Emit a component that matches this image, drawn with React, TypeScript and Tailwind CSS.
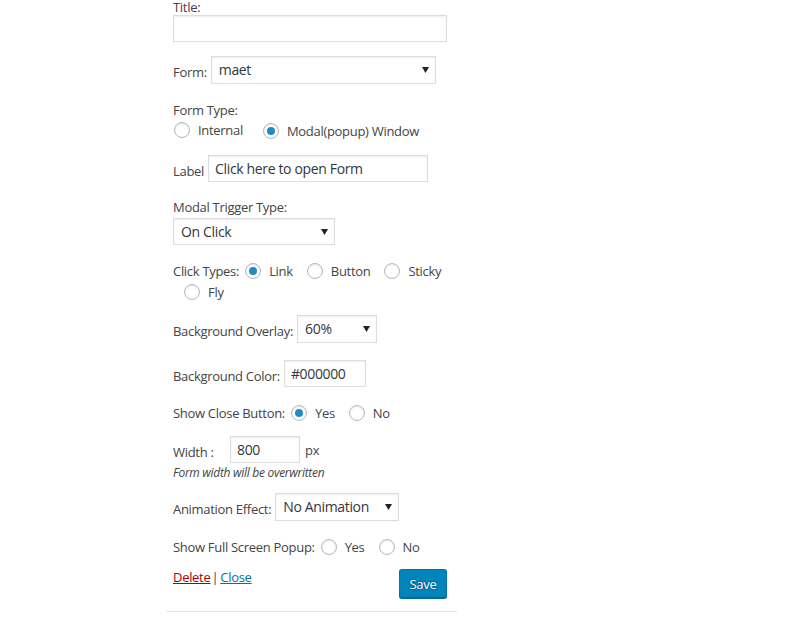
import React from "react";

const font = { fontFamily: '"Open Sans", "Noto Sans", sans-serif' };

function Radio({ checked }: { checked?: boolean }) {
  return (
    <span className="inline-flex h-[16px] w-[16px] shrink-0 items-center justify-center rounded-full border border-[#b4b9be] bg-white shadow-[inset_0_1px_2px_rgba(0,0,0,0.1)]">
      {checked && <span className="block h-[8px] w-[8px] rounded-full bg-[#1e8cbe]" />}
    </span>
  );
}

function RadioOpt({ label, checked, className = "" }: { label: string; checked?: boolean; className?: string }) {
  return (
    <span className={"inline-flex items-center " + className}>
      <Radio checked={checked} />
      <span className="ml-[8px]">{label}</span>
    </span>
  );
}

function Select({ value, w }: { value: string; w: string }) {
  return (
    <div className={"flex h-full items-center justify-between border border-[#ddd] bg-white pl-[7px] pr-[6px] text-[14px] tracking-[-0.35px] text-[#32373c] shadow-[inset_0_1px_2px_rgba(0,0,0,0.07)] " + w}>
      <span>{value}</span>
      <svg width="7" height="6" viewBox="0 0 7 6">
        <path d="M0 0 L7 0 L3.5 6 Z" fill="#222" />
      </svg>
    </div>
  );
}

function Input({ value, w }: { value?: string; w: string }) {
  return (
    <div className={"flex h-full items-center border border-[#ddd] bg-white px-[6px] text-[14px] tracking-[-0.35px] text-[#32373c] shadow-[inset_0_1px_2px_rgba(0,0,0,0.07)] " + w}>
      {value}
    </div>
  );
}

export default function App() {
  return (
    <div className="min-h-[644px] w-[812px] overflow-hidden bg-white" style={font}>
      <div className="ml-[166px] w-[291px] border-b border-[#e5e5e5] pb-[13px] pl-[7px] pr-[10px] text-[13px] leading-[18px] tracking-[-0.3px] text-[#444]">
        <div className="h-[15px] leading-[15px]">Title:</div>
        <div className="h-[27px]">
          <Input w="w-[274px]" />
        </div>

        <div className="mt-[14px] flex h-[28px] items-center">
          <span className="mt-[3px]">Form:</span>
          <div className="ml-[4px] h-full">
            <Select value="maet" w="w-[225px]" />
          </div>
        </div>

        <div className="mt-[17px] h-[18px]">Form Type:</div>
        <div className="mt-[3px] flex h-[18px] items-center">
          <span className="ml-[1px]"><RadioOpt label="Internal" /></span>
          <RadioOpt label="Modal(popup) Window" checked className="ml-[20px]" />
        </div>

        <div className="mt-[15px] flex h-[27px] items-center">
          <span className="mt-[4px]">Label</span>
          <div className="ml-[4px] h-full">
            <Input value="Click here to open Form" w="w-[220px]" />
          </div>
        </div>

        <div className="mt-[16px] h-[18px]">Modal Trigger Type:</div>
        <div className="mt-[2px] h-[27px]">
          <Select value="On Click" w="w-[162px]" />
        </div>

        <div className="mt-[17px] flex h-[18px] items-center">
          <span>Click Types:</span>
          <RadioOpt label="Link" checked className="ml-[6px]" />
          <RadioOpt label="Button" className="ml-[14px]" />
          <RadioOpt label="Sticky" className="ml-[14px]" />
        </div>
        <div className="mt-[3px] flex h-[18px] items-center pl-[11px]">
          <RadioOpt label="Fly" />
        </div>

        <div className="mt-[14px] flex h-[28px] items-center">
          <span className="mt-[3px]">Background Overlay:</span>
          <div className="ml-[4px] h-full">
            <Select value="60%" w="w-[80px]" />
          </div>
        </div>

        <div className="mt-[17px] flex h-[27px] items-center">
          <span className="mt-[5px]">Background Color:</span>
          <div className="ml-[4px] h-full">
            <Input value="#000000" w="w-[82px]" />
          </div>
        </div>

        <div className="mt-[17px] flex h-[18px] items-center">
          <span>Show Close Button:</span>
          <RadioOpt label="Yes" checked className="ml-[6px]" />
          <RadioOpt label="No" className="ml-[14px]" />
        </div>

        <div className="mt-[14px] flex h-[27px] items-center">
          <span className="mt-[4px] w-[57px]">Width :</span>
          <div className="h-full">
            <Input value="800" w="w-[70px]" />
          </div>
          <span className="ml-[5px]">px</span>
        </div>
        <div className="mt-[2px] h-[16px] text-[12px] italic leading-[16px]">Form width will be overwritten</div>

        <div className="mt-[12px] flex h-[28px] items-center">
          <span className="mt-[3px]">Animation Effect:</span>
          <div className="ml-[4px] h-full">
            <Select value="No Animation" w="w-[124px]" />
          </div>
        </div>

        <div className="mt-[17px] flex h-[18px] items-center">
          <span>Show Full Screen Popup:</span>
          <RadioOpt label="Yes" className="ml-[6px]" />
          <RadioOpt label="No" className="ml-[14px]" />
        </div>

        <div className="mt-[13px] flex h-[29px] items-start justify-between">
          <div className="-mt-[1px] flex">
            <span className="text-[#a00] underline">Delete</span>
            <span className="ml-[1px] text-[#444]">|</span>
            <span className="ml-[2px] text-[#0073aa] underline">Close</span>
          </div>
          <button className="h-[29px] w-[48px] rounded-[3px] border border-[#0073aa] border-b-[#006799] bg-[#0085ba] text-[13px] text-white shadow-[0_1px_0_#006799] [text-shadow:0_-1px_1px_#006799,1px_0_1px_#006799,0_1px_1px_#006799,-1px_0_1px_#006799]">
            Save
          </button>
        </div>
      </div>
    </div>
  );
}
